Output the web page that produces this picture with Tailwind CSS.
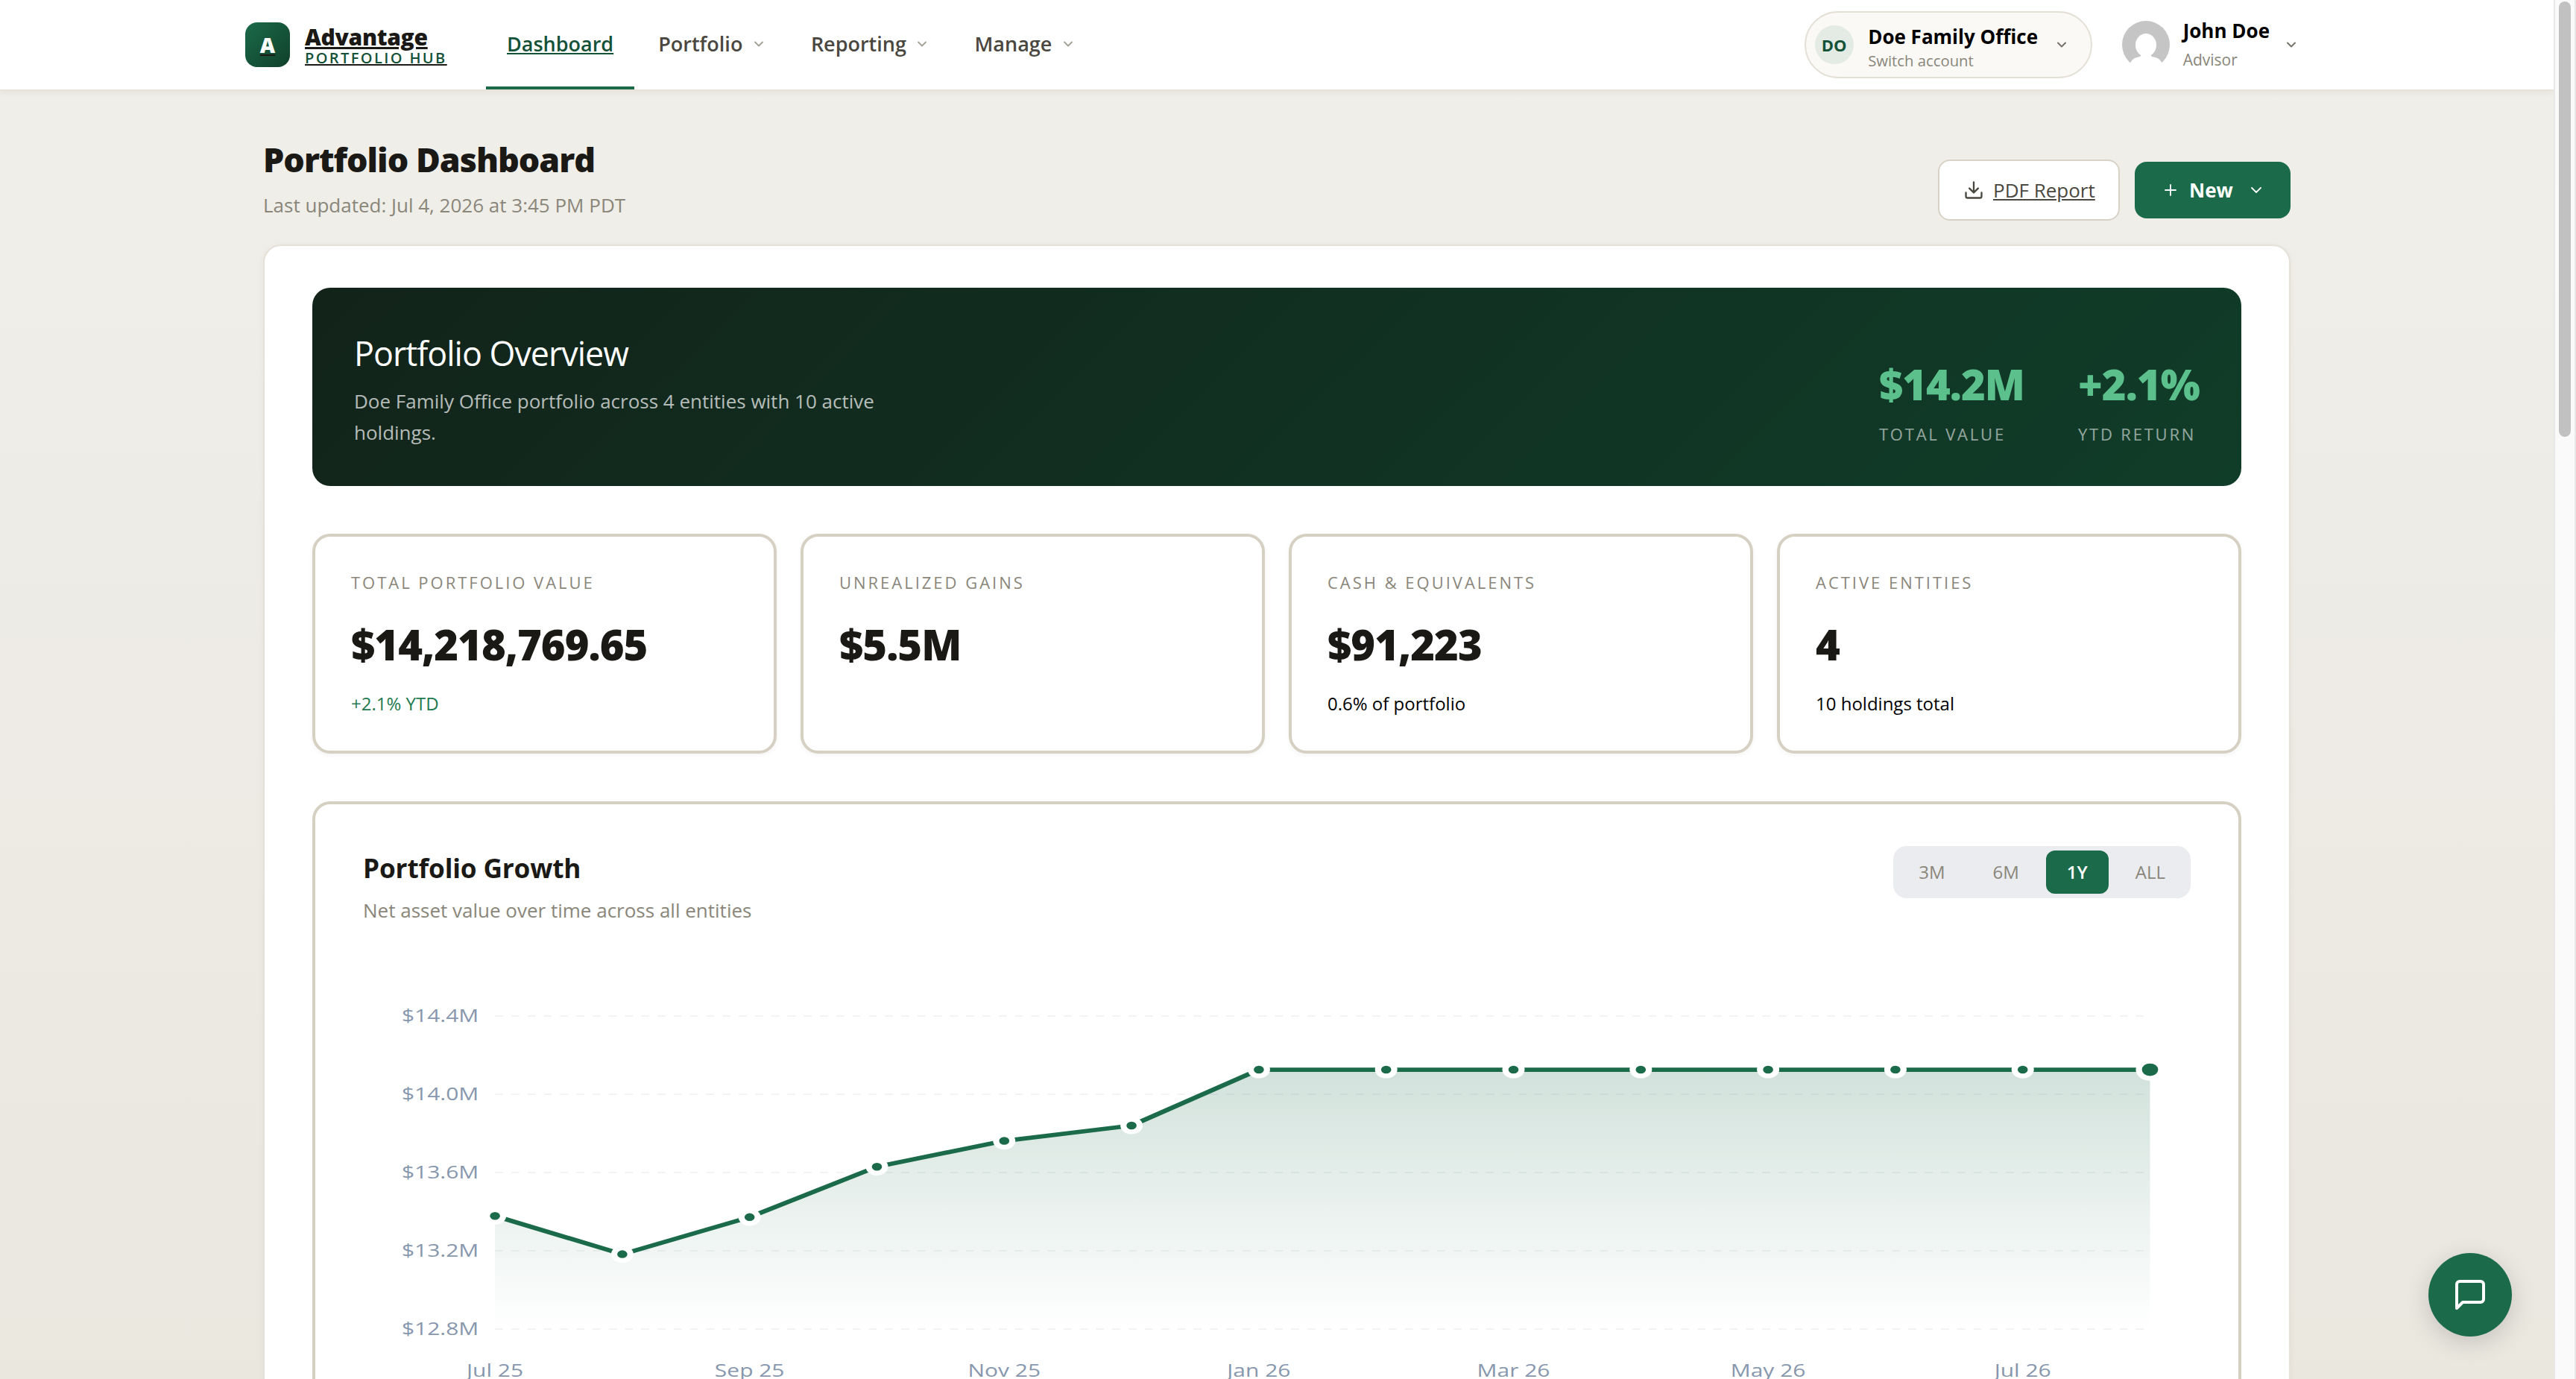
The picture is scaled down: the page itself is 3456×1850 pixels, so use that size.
<!DOCTYPE html>
<html lang="en">
<head>
<meta charset="utf-8">
<title>Portfolio Dashboard</title>
<script src="https://cdn.jsdelivr.net/npm/@tailwindcss/browser@4"></script>
</head>
<body class="font-['Open_Sans',sans-serif] h-screen overflow-hidden flex text-[#1a1916]">
<svg class="hidden">
  <symbol id="chev" viewBox="0 0 24 24"><path d="M6 9l6 6 6-6" fill="none" stroke="currentColor" stroke-linecap="round" stroke-linejoin="round"/></symbol>
</svg>

<div class="w-[3426px] h-full overflow-hidden bg-linear-to-b from-[#f0efea] to-[#eae7df]">

  <header class="relative h-[122px] bg-white border-b-2 border-[#e6e2d9] shadow-[0_2px_8px_rgba(80,60,20,0.07)]">
    <div class="mx-auto w-[2768px] h-[120px] flex items-center">
      <a class="flex items-center gap-5 w-[271px] underline decoration-[#1a1916]">
        <span class="size-[60px] rounded-2xl bg-linear-to-br from-[#1b6b4a] to-[#10402b] flex items-center justify-center text-white text-[28px] leading-[60px] font-extrabold">A</span>
        <span class="flex flex-col">
          <span class="text-[30px] leading-9 font-extrabold tracking-[-0.01em]">Advantage</span>
          <span class="text-[20px] leading-5 font-semibold tracking-[0.12em] text-[#145238] whitespace-nowrap">PORTFOLIO HUB</span>
        </span>
      </a>
      <nav class="ml-[52px] h-full flex gap-1 text-[27px] font-semibold text-[#4a4740]">
        <a class="px-7 pt-[2px] border-b-4 border-[#1b6b4a] flex items-center text-[#145238] underline">Dashboard</a>
        <a class="px-7 pt-[2px] border-b-4 border-transparent flex items-center gap-[11.500px]">Portfolio<svg class="size-5 text-[#a3a097]" stroke-width="2.2"><use href="#chev"/></svg></a>
        <a class="px-7 pt-[2px] border-b-4 border-transparent flex items-center gap-[11.500px]">Reporting<svg class="size-5 text-[#a3a097]" stroke-width="2.2"><use href="#chev"/></svg></a>
        <a class="px-7 pt-[2px] border-b-4 border-transparent flex items-center gap-[11.500px]">Manage<svg class="size-5 text-[#a3a097]" stroke-width="2.2"><use href="#chev"/></svg></a>
      </nav>
      <div class="ml-auto w-[386px] h-[90px] rounded-full border-2 border-[#e4e0d6] bg-[#faf9f6] pl-3 flex items-center">
        <span class="size-[52px] rounded-full bg-[#e3ebe4] text-[#145238] text-[22px] font-bold flex items-center justify-center">DO</span>
        <span class="ml-[19.500px] pt-[6px] flex flex-col">
          <span class="text-[26px] leading-[34px] font-bold text-black">Doe Family Office</span>
          <span class="mt-[2px] text-[20.300px] leading-[27px] text-[#8a867a]">Switch account</span>
        </span>
        <svg class="ml-[21.500px] size-5 text-[#76736a]" stroke-width="2.4"><use href="#chev"/></svg>
      </div>
      <div class="ml-10 mr-[13px] flex items-center">
        <svg class="size-16" viewBox="0 0 64 64">
          <circle cx="32" cy="32" r="32" fill="#c5c5c5"/>
          <ellipse cx="32" cy="32.5" rx="14" ry="15.5" fill="#fff"/>
          <path d="M25 42 C26 46 25.500 48 22 48.500 C16.500 49.500 13 52 11 56.500 L14 66 H50 L53.500 56.500 C51.500 52 48 49.500 42.500 48.500 C38.500 48 38 46 39 42Z" fill="#fff"/>
        </svg>
        <span class="ml-[18px] pb-[3px] flex flex-col">
          <span class="text-[26px] leading-[34px] font-bold text-black">John Doe</span>
          <span class="mt-[9px] text-[21px] leading-[26px] text-[#8a867a]">Advisor</span>
        </span>
        <svg class="ml-[19px] size-5 text-[#76736a]" stroke-width="2.4"><use href="#chev"/></svg>
      </div>
    </div>
  </header>

  <main class="mx-auto w-[2720px] pt-16">
    <div class="h-[110px] flex items-end justify-between">
      <div>
        <h1 class="text-[44.8px] leading-[56px] font-extrabold tracking-[-0.022em]">Portfolio Dashboard</h1>
        <p class="mt-3 text-[26px] leading-[42px] text-[#8a867a]">Last updated: Jul 4, 2026 at 3:45 PM PDT</p>
      </div>
      <div class="flex items-center gap-5">
        <a class="h-[82px] w-[244px] pl-8 rounded-[16px] border-2 border-[#d8d2c6] bg-white flex items-center gap-3 text-[26px] font-medium text-[#4a4740]">
          <svg class="size-7 shrink-0" viewBox="0 0 24 24" fill="none" stroke="currentColor" stroke-width="2" stroke-linecap="round" stroke-linejoin="round"><path d="M21 15v4a2 2 0 0 1-2 2H5a2 2 0 0 1-2-2v-4M7 10l5 5 5-5M12 15V3"/></svg>
          <span class="underline whitespace-nowrap">PDF Report</span>
        </a>
        <button class="h-[76px] w-[209px] pl-9 rounded-[16px] bg-[#1b6b4a] text-white text-[26px] font-bold flex items-center">
          <svg class="size-6" viewBox="0 0 24 24" fill="none" stroke="currentColor" stroke-width="1.800" stroke-linecap="round"><path d="M12 5v14M5 12h14"/></svg>
          <span class="ml-[13px]">New</span>
          <svg class="ml-[19px] size-6" stroke-width="1.800"><use href="#chev"/></svg>
        </button>
      </div>
    </div>

    <div class="mt-8 h-[1700px] rounded-3xl border-2 border-[#e5e1d8] bg-white px-16 pt-14 shadow-[0_2px_8px_rgba(80,60,20,0.05)]">

      <section class="h-[266px] rounded-3xl bg-linear-[135deg] from-[#12231a] to-[#103d29] px-14 pt-14 flex items-start justify-between text-white">
        <div class="w-[720px]">
          <h2 class="text-[44.8px] leading-[64px] tracking-[-0.022em]">Portfolio Overview</h2>
          <p class="mt-[11px] text-[26px] leading-[42px] text-white/70">Doe Family Office portfolio across 4 entities with 10 active holdings.</p>
        </div>
        <div class="mt-[45px] flex gap-[72px]">
          <div>
            <div class="text-[56px] leading-[56px] font-extrabold tracking-[-1px] text-[#5bc08c]">$14.2M</div>
            <div class="mt-6 text-[22px] leading-[30px] tracking-[2.800px] text-white/55">TOTAL VALUE</div>
          </div>
          <div class="w-[163px]">
            <div class="text-[56px] leading-[56px] font-extrabold tracking-[-1px] text-[#5bc08c]">+2.1%</div>
            <div class="mt-6 text-[22px] leading-[30px] tracking-[2.800px] text-white/55 whitespace-nowrap">YTD RETURN</div>
          </div>
        </div>
      </section>

      <section class="mt-16 grid grid-cols-4 gap-8">
        <div class="h-[295px] rounded-3xl border-4 border-[#d6d0c3] bg-white px-12 pt-11 shadow-[0_2px_6px_rgba(0,0,0,0.05)]">
          <div class="text-[22px] leading-[34px] tracking-[2.980px] text-[#8a867a]">TOTAL PORTFOLIO VALUE</div>
          <div class="mt-[38px] text-[56px] leading-[56px] font-extrabold tracking-[-1px]">$14,218,769.65</div>
          <div class="mt-[34px] text-[24px] leading-9 text-[#1f7a50]">+2.1% YTD</div>
        </div>
        <div class="h-[295px] rounded-3xl border-4 border-[#d6d0c3] bg-white px-12 pt-11 shadow-[0_2px_6px_rgba(0,0,0,0.05)]">
          <div class="text-[22px] leading-[34px] tracking-[2.980px] text-[#8a867a]">UNREALIZED GAINS</div>
          <div class="mt-[38px] text-[56px] leading-[56px] font-extrabold tracking-[-1px]">$5.5M</div>
        </div>
        <div class="h-[295px] rounded-3xl border-4 border-[#d6d0c3] bg-white px-12 pt-11 shadow-[0_2px_6px_rgba(0,0,0,0.05)]">
          <div class="text-[22px] leading-[34px] tracking-[2.980px] text-[#8a867a]">CASH &amp; EQUIVALENTS</div>
          <div class="mt-[38px] text-[56px] leading-[56px] font-extrabold tracking-[-1px]">$91,223</div>
          <div class="mt-[34px] text-[24px] leading-9 text-black">0.6% of portfolio</div>
        </div>
        <div class="h-[295px] rounded-3xl border-4 border-[#d6d0c3] bg-white px-12 pt-11 shadow-[0_2px_6px_rgba(0,0,0,0.05)]">
          <div class="text-[22px] leading-[34px] tracking-[2.980px] text-[#8a867a]">ACTIVE ENTITIES</div>
          <div class="mt-[38px] text-[56px] leading-[56px] font-extrabold tracking-[-1px]">4</div>
          <div class="mt-[34px] text-[24px] leading-9 text-black">10 holdings total</div>
        </div>
      </section>

      <section class="mt-16 h-[900px] rounded-3xl border-4 border-[#d6d0c3] bg-white px-16 pt-14">
        <div class="flex items-start justify-between">
          <div class="pt-[5px]">
            <h3 class="text-[35.2px] leading-[48px] font-bold tracking-[-0.15px]">Portfolio Growth</h3>
            <p class="mt-3 text-[26px] leading-[42px] text-[#8a867a]">Net asset value over time across all entities</p>
          </div>
          <div class="h-[70px] rounded-[18px] bg-[#ebecf0] p-[6px] flex gap-2 text-[24px] leading-[58px] text-[#8a867a]">
            <span class="px-7 font-medium">3M</span>
            <span class="px-7 font-medium">6M</span>
            <span class="px-7 rounded-xl bg-[#1b6b4a] text-white font-semibold">1Y</span>
            <span class="px-7 font-medium">ALL</span>
          </div>
        </div>
        <svg class="mt-[78.5px] block w-[2452px] h-[588px]" viewBox="0 0 900 280" preserveAspectRatio="none" id="chart">
          <defs><linearGradient id="area" x1="0" y1="0" x2="0" y2="1"><stop offset="0" stop-color="#1b6b4a" stop-opacity="0.2"/><stop offset="1" stop-color="#1b6b4a" stop-opacity="0"/></linearGradient></defs>
        </svg>
      </section>
    </div>
  </main>
</div>

<aside class="w-[30px] h-full bg-[#fafafa] border-x-2 border-[#e8e8e8] pt-[2px] flex justify-center">
  <div class="w-4 h-[584px] rounded-full bg-[#c1c1c1]"></div>
</aside>

<button class="fixed left-[3258px] top-[1681px] size-[112px] rounded-full bg-[#1b6b4a] text-white flex items-center justify-center shadow-[0_8px_32px_rgba(0,0,0,0.16)]">
  <svg class="size-12" viewBox="0 0 24 24" fill="none" stroke="currentColor" stroke-width="2" stroke-linecap="round" stroke-linejoin="round"><path d="M21 15a2 2 0 0 1-2 2H7l-4 4V5a2 2 0 0 1 2-2h14a2 2 0 0 1 2 2z"/></svg>
</button>

<script>
const X0 = 65, X1 = 880, Y0 = 20, Y1 = 220;
const ys = [147.75, 172.2, 148.5, 116.3, 99.8, 90, 54.3, 54.3, 54.3, 54.3, 54.3, 54.3, 54.3, 54.3];
const pts = ys.map((y, i) => [X0 + (X1 - X0) * i / 13, y]);
const line = pts.map(p => p.map(v => v.toFixed(2)).join(' ')).join(' L');
let s = '';
['$14.4M', '$14.0M', '$13.6M', '$13.2M', '$12.8M'].forEach((t, i) => {
  const y = Y0 + 50 * i;
  s += `<line x1="${X0}" x2="${X1}" y1="${y}" y2="${y}" stroke="#e5e7eb" stroke-width="0.5" stroke-dasharray="4 4"/>`;
  s += `<text x="57" y="${y + 4}" text-anchor="end" font-size="11" fill="#8797ad">${t}</text>`;
});
s += `<path d="M${line} L${X1} ${Y1} L${X0} ${Y1}Z" fill="url(#area)"/>`;
s += `<path d="M${line}" fill="none" stroke="#1b6b4a" stroke-width="2.75" stroke-linejoin="round"/>`;
pts.forEach(([x, y], i) => {
  s += `<circle cx="${x}" cy="${y}" r="${i === 13 ? 5.5 : 4}" fill="#1b6b4a" stroke="#fff" stroke-width="3"/>`;
});
['Jul 25', 'Sep 25', 'Nov 25', 'Jan 26', 'Mar 26', 'May 26', 'Jul 26'].forEach((t, i) => {
  s += `<text x="${pts[i * 2][0]}" y="250.5" text-anchor="middle" font-size="11" fill="#8797ad">${t}</text>`;
});
document.getElementById('chart').insertAdjacentHTML('beforeend', s);
</script>
</body>
</html>
